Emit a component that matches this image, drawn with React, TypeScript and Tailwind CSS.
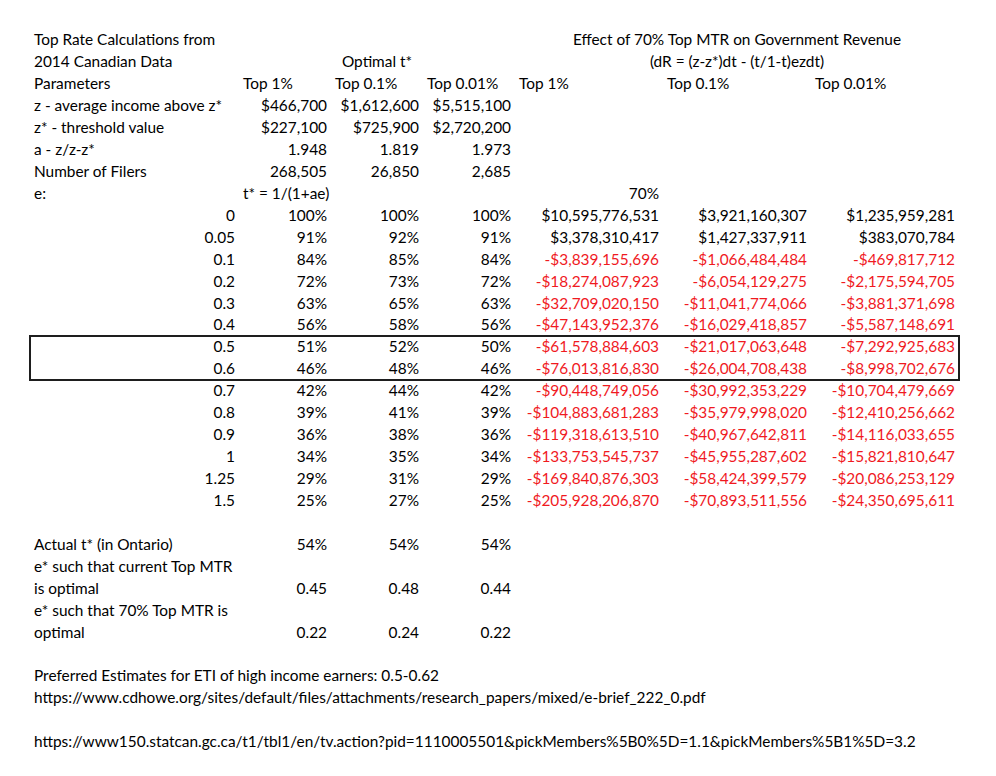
import React from "react";

type Cell = { t?: string; a?: "l" | "r" | "c"; span?: number; red?: boolean };

const GRID = "grid grid-cols-[209px_92px_92px_92px_148px_148px_148px] h-[21.95px] items-center";

function Row({ cells }: { cells: Cell[] }) {
  return (
    <div className={GRID}>
      {cells.map((c, i) => (
        <div
          key={i}
          className={
            "whitespace-nowrap px-[4px] leading-none overflow-visible " +
            (c.span === 3 ? "col-span-3 " : "") +
            (c.a === "r" ? "text-right " : c.a === "c" ? "text-center " : "text-left ") +
            (c.red ? "text-[#f01a1f]" : "text-black")
          }
        >
          {c.t ?? ""}
        </div>
      ))}
    </div>
  );
}

const L = (t: string): Cell => ({ t, a: "l" });
const R = (t: string): Cell => ({ t, a: "r" });
const Rr = (t: string): Cell => ({ t, a: "r", red: true });
const E: Cell = { t: "" };

const eRows: [string, string, string, string, string, string, string][] = [
  ["0", "100%", "100%", "100%", "$10,595,776,531", "$3,921,160,307", "$1,235,959,281"],
  ["0.05", "91%", "92%", "91%", "$3,378,310,417", "$1,427,337,911", "$383,070,784"],
  ["0.1", "84%", "85%", "84%", "-$3,839,155,696", "-$1,066,484,484", "-$469,817,712"],
  ["0.2", "72%", "73%", "72%", "-$18,274,087,923", "-$6,054,129,275", "-$2,175,594,705"],
  ["0.3", "63%", "65%", "63%", "-$32,709,020,150", "-$11,041,774,066", "-$3,881,371,698"],
  ["0.4", "56%", "58%", "56%", "-$47,143,952,376", "-$16,029,418,857", "-$5,587,148,691"],
  ["0.5", "51%", "52%", "50%", "-$61,578,884,603", "-$21,017,063,648", "-$7,292,925,683"],
  ["0.6", "46%", "48%", "46%", "-$76,013,816,830", "-$26,004,708,438", "-$8,998,702,676"],
  ["0.7", "42%", "44%", "42%", "-$90,448,749,056", "-$30,992,353,229", "-$10,704,479,669"],
  ["0.8", "39%", "41%", "39%", "-$104,883,681,283", "-$35,979,998,020", "-$12,410,256,662"],
  ["0.9", "36%", "38%", "36%", "-$119,318,613,510", "-$40,967,642,811", "-$14,116,033,655"],
  ["1", "34%", "35%", "34%", "-$133,753,545,737", "-$45,955,287,602", "-$15,821,810,647"],
  ["1.25", "29%", "31%", "29%", "-$169,840,876,303", "-$58,424,399,579", "-$20,086,253,129"],
  ["1.5", "25%", "27%", "25%", "-$205,928,206,870", "-$70,893,511,556", "-$24,350,695,611"],
];

function eRow(r: string[]) {
  const neg = r[4].startsWith("-");
  return (
    <Row
      key={r[0]}
      cells={[R(r[0]), R(r[1]), R(r[2]), R(r[3]), neg ? Rr(r[4]) : R(r[4]), neg ? Rr(r[5]) : R(r[5]), neg ? Rr(r[6]) : R(r[6])]}
    />
  );
}

export default function App() {
  return (
    <div className="w-[996px] h-[776px] bg-white overflow-hidden font-['Lato',sans-serif] text-[15.4px] text-black">
      <div className="pt-[29px] pl-[30px]">
        <Row cells={[L("Top Rate Calculations from"), E, E, E, { t: "Effect of 70% Top MTR on Government Revenue", a: "c", span: 3 }]} />
        <Row cells={[L("2014 Canadian Data"), { t: "Optimal t*", a: "c", span: 3 }, { t: "(dR = (z-z*)dt - (t/1-t)ezdt)", a: "c", span: 3 }]} />
        <Row cells={[L("Parameters"), L("Top 1%"), L("Top 0.1%"), L("Top 0.01%"), L("Top 1%"), L("Top 0.1%"), L("Top 0.01%")]} />
        <Row cells={[L("z - average income above z*"), R("$466,700"), R("$1,612,600"), R("$5,515,100"), E, E, E]} />
        <Row cells={[L("z* - threshold value"), R("$227,100"), R("$725,900"), R("$2,720,200"), E, E, E]} />
        <Row cells={[L("a - z/z-z*"), R("1.948"), R("1.819"), R("1.973"), E, E, E]} />
        <Row cells={[L("Number of Filers"), R("268,505"), R("26,850"), R("2,685"), E, E, E]} />
        <Row cells={[L("e:"), R("t* = 1/(1+ae)"), E, E, R("70%"), E, E]} />
        {eRows.slice(0, 6).map(eRow)}
        <div className="w-[929px] outline-2 outline-offset-[-1px] outline-[#1e1e1e]">
          {eRows.slice(6, 8).map(eRow)}
        </div>
        {eRows.slice(8).map(eRow)}
        <Row cells={[E]} />
        <Row cells={[L("Actual t* (in Ontario)"), R("54%"), R("54%"), R("54%")]} />
        <Row cells={[L("e* such that current Top MTR")]} />
        <Row cells={[L("is optimal"), R("0.45"), R("0.48"), R("0.44")]} />
        <Row cells={[L("e* such that 70% Top MTR is")]} />
        <Row cells={[L("optimal"), R("0.22"), R("0.24"), R("0.22")]} />
        <Row cells={[E]} />
        <Row cells={[L("Preferred Estimates for ETI of high income earners: 0.5-0.62")]} />
        <Row cells={[L("https://www.cdhowe.org/sites/default/files/attachments/research_papers/mixed/e-brief_222_0.pdf")]} />
        <Row cells={[E]} />
        <Row cells={[L("https://www150.statcan.gc.ca/t1/tbl1/en/tv.action?pid=1110005501&pickMembers%5B0%5D=1.1&pickMembers%5B1%5D=3.2")]} />
      </div>
    </div>
  );
}
